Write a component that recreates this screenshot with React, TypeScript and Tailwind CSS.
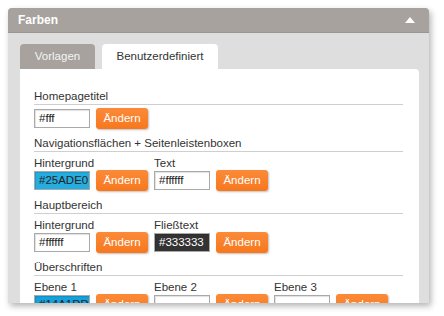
import React from "react";

type Field = { label?: string; value: string; bg?: string; fg?: string };

function ColorField({ value, bg, fg }: Field) {
  return (
    <div className="flex items-center gap-[6px] w-[114px]">
      <div
        className={`w-[56px] h-[19px] border border-[#a9a9a9] shadow-[inset_1px_1px_1px_rgba(0,0,0,0.12)] px-[4px] text-[11.5px] leading-[17px] ${bg ?? "bg-white"} ${fg ?? "text-[#222]"}`}
      >
        {value}
      </div>
      <button className="w-[52px] h-[21px] rounded-[3px] bg-gradient-to-b from-[#fb8a38] to-[#f7781c] text-white text-[11.5px] leading-[21px] shadow-[1px_1px_2px_rgba(0,0,0,0.25)]">
        Ändern
      </button>
    </div>
  );
}

function Section({ title, fields, labels, first }: { title: string; fields: Field[]; labels?: boolean; first?: boolean }) {
  return (
    <div className={first ? "" : "mt-[7px]"}>
      <div className="text-[11.5px] leading-[15px] text-[#333] border-b border-[#cfcfcf] w-[369px]">{title}</div>
      <div className="flex gap-[6px] mt-[3px]">
        {fields.map((f, i) => (
          <div key={i} className="flex flex-col">
            {labels && <div className="text-[11.5px] leading-[14px] text-[#333] mt-[1px]">{f.label}</div>}
            <ColorField {...f} />
          </div>
        ))}
      </div>
    </div>
  );
}

export default function App() {
  return (
    <div className="w-[444px] h-[316px] bg-white pt-[8px] pl-[8px]" style={{ fontFamily: '"Liberation Sans", Arial, sans-serif' }}>
      <div className="w-[421px] h-[295px] rounded-t-[4px] overflow-hidden bg-[#dedede] shadow-[2px_3px_6px_rgba(0,0,0,0.3)] flex flex-col">
        <div className="h-[25px] shrink-0 bg-[#a7a29d] border-b border-[#9a958f] flex items-center justify-between pl-[10px] pr-[14px]">
          <span className="text-white font-bold text-[12px]">Farben</span>
          <svg width="10" height="6" viewBox="0 0 10 6">
            <path d="M0 6 L5 0 L10 6 Z" fill="#fff" />
          </svg>
        </div>
        <div className="flex-1 min-h-0 pl-[12px] pr-[10px] pt-[11px] flex flex-col">
          <div className="flex gap-[7px] items-end shrink-0">
            <div className="w-[75px] h-[25px] rounded-t-[4px] bg-[#a7a29d] text-[#f4f4f4] text-[11.5px] flex items-center justify-center">
              Vorlagen
            </div>
            <div className="w-[116px] h-[25px] rounded-t-[4px] bg-white text-[#333] text-[11.5px] flex items-center justify-center">
              Benutzerdefiniert
            </div>
          </div>
          <div className="flex-1 min-h-0 overflow-hidden bg-white rounded-tr-[4px] pl-[14px] pt-[20px]">
            <Section first title="Homepagetitel" fields={[{ value: "#fff" }]} />
            <Section
              title="Navigationsflächen + Seitenleistenboxen"
              labels
              fields={[
                { label: "Hintergrund", value: "#25ADE0", bg: "bg-[#25ade0]" },
                { label: "Text", value: "#ffffff" },
              ]}
            />
            <Section
              title="Hauptbereich"
              labels
              fields={[
                { label: "Hintergrund", value: "#ffffff" },
                { label: "Fließtext", value: "#333333", bg: "bg-[#333333]", fg: "text-white" },
              ]}
            />
            <Section
              title="Überschriften"
              labels
              fields={[
                { label: "Ebene 1", value: "#14A1DD", bg: "bg-[#14a1dd]" },
                { label: "Ebene 2", value: "" },
                { label: "Ebene 3", value: "" },
              ]}
            />
          </div>
        </div>
      </div>
    </div>
  );
}
